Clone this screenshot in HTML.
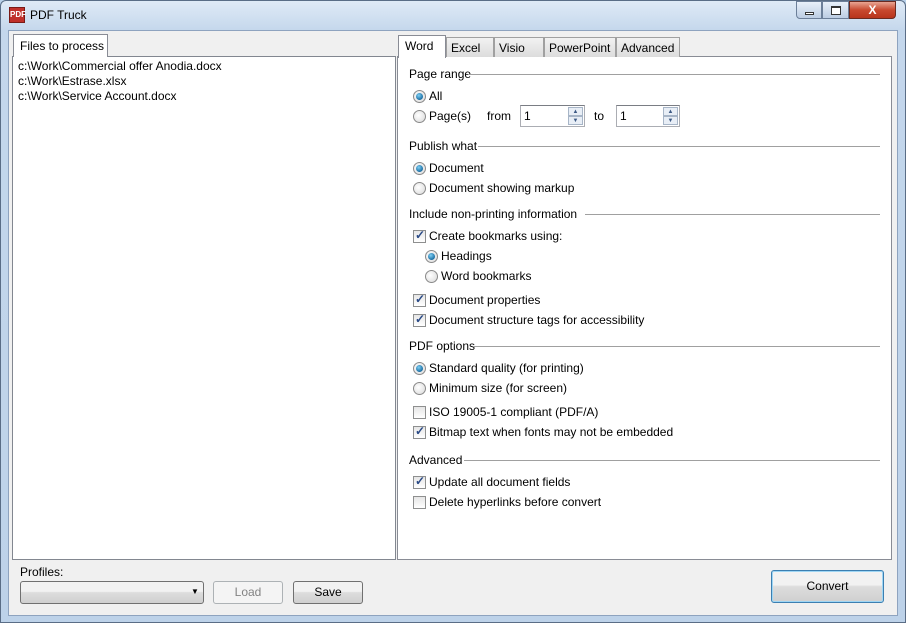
<!DOCTYPE html>
<html><head><meta charset="utf-8"><style>
*{box-sizing:border-box;margin:0;padding:0}
body{width:906px;height:623px;overflow:hidden;font-family:"Liberation Sans",sans-serif;font-size:12px;color:#000;position:relative;background:#b9d1ea}
.a{position:absolute}
.frame{left:0;top:0;width:906px;height:623px;background:linear-gradient(#dfeaf6,#c4d7ec 30px,#bdd2e9);border:1px solid #5a6d86;border-radius:6px 6px 0 0}
.client{left:8px;top:30px;width:890px;height:586px;background:#f0f0f0;border:1px solid #8ea3bf}
.t{white-space:nowrap;line-height:14px}
.rb{width:13px;height:13px;border-radius:50%;border:1px solid #8a8a8a;background:radial-gradient(circle at 40% 40%,#fff,#d8d8d8)}
.rb.on::after{content:"";position:absolute;left:2px;top:2px;width:7px;height:7px;border-radius:50%;background:radial-gradient(circle at 40% 35%,#7fd0f5,#1b6ea3 70%,#164e78)}
.cb{width:13px;height:13px;border:1px solid #8e8f8f;background:linear-gradient(#e6e6e6,#fff)}
.cb.on::after{content:"✓";position:absolute;left:1px;top:-3px;font-size:12px;font-weight:bold;color:#2a4a86}
.hl{height:1px;background:#a0a0a0}
.tab{top:37px;height:20px;border:1px solid #a0a0a0;border-bottom:none;background:linear-gradient(#f2f2f2,#dcdcdc);padding:3px 4px 0 4px}
.btn{border:1px solid #707070;border-radius:3px;background:linear-gradient(#f2f2f2 45%,#dddddd 50%,#cfcfcf);text-align:center;line-height:20px}
</style></head><body>
<div class="a frame"></div>
<div class="a" style="left:9px;top:7px;width:16px;height:16px;background:#c0302a;border:1px solid #7a1a16;color:#fff;font-size:8px;font-weight:bold;line-height:14px;text-align:center">PDF</div>
<div class="a t" style="left:30px;top:8px;font-size:12px">PDF Truck</div>
<div class="a" style="left:796px;top:1px;width:26px;height:18px;border:1px solid #6c7f99;border-radius:0 0 0 4px;background:linear-gradient(#e8f0fa,#bccde3)"><div class="a" style="left:8px;top:10px;width:9px;height:3px;border:1px solid #333;background:#fff"></div></div>
<div class="a" style="left:822px;top:1px;width:27px;height:18px;border:1px solid #6c7f99;background:linear-gradient(#e8f0fa,#bccde3)"><div class="a" style="left:8px;top:4px;width:10px;height:9px;border:1px solid #333;border-top-width:2px;background:#fff"></div></div>
<div class="a" style="left:849px;top:1px;width:47px;height:18px;border:1px solid #6b2a20;border-radius:0 0 4px 0;background:linear-gradient(#e9a593,#c8492f 50%,#b8341c);color:#fff;font-weight:bold;text-align:center;line-height:16px;font-size:12px">X</div>
<div class="a client"></div>
<!-- left panel -->
<div class="a" style="left:12px;top:56px;width:384px;height:504px;background:#fff;border:1px solid #828790"></div>
<div class="a t" style="left:13px;top:34px;width:95px;height:23px;background:#fff;border:1px solid #898c95;border-bottom:none;padding:4px 0 0 6px">Files to process</div>
<div class="a t" style="left:18px;top:59px">c:\Work\Commercial offer Anodia.docx</div>
<div class="a t" style="left:18px;top:74px">c:\Work\Estrase.xlsx</div>
<div class="a t" style="left:18px;top:89px">c:\Work\Service Account.docx</div>
<!-- right panel -->
<div class="a" style="left:397px;top:56px;width:495px;height:504px;background:#fff;border:1px solid #898c95"></div>
<div class="a tab t" style="left:446px;width:48px">Excel</div>
<div class="a tab t" style="left:494px;width:50px">Visio</div>
<div class="a tab t" style="left:544px;width:72px">PowerPoint</div>
<div class="a tab t" style="left:616px;width:64px">Advanced</div>
<div class="a t" style="left:398px;top:35px;width:48px;height:23px;background:#fff;border:1px solid #898c95;border-bottom:none;padding:3px 0 0 6px">Word</div>

<div class="a t" style="left:409px;top:67px">Page range</div><div class="a hl" style="left:468px;top:74px;width:412px"></div>
<div class="a rb on" style="left:413px;top:90px"></div><div class="a t" style="left:429px;top:89px">All</div>
<div class="a rb" style="left:413px;top:110px"></div><div class="a t" style="left:429px;top:109px">Page(s)</div>
<div class="a t" style="left:487px;top:109px">from</div>
<div class="a" style="left:520px;top:105px;width:65px;height:22px;border:1px solid #abadb3;border-top-color:#7a7d84;background:#fff"><span class="a t" style="left:3px;top:3px">1</span><div class="a" style="left:47px;top:1px;width:15px;height:9px;border:1px solid #a7b5c7;background:#e8eef6;font-size:6px;text-align:center;line-height:8px;color:#3d5a85">▲</div><div class="a" style="left:47px;top:10px;width:15px;height:9px;border:1px solid #a7b5c7;background:#e8eef6;font-size:6px;text-align:center;line-height:8px;color:#3d5a85">▼</div></div>
<div class="a t" style="left:594px;top:109px">to</div>
<div class="a" style="left:616px;top:105px;width:64px;height:22px;border:1px solid #abadb3;border-top-color:#7a7d84;background:#fff"><span class="a t" style="left:3px;top:3px">1</span><div class="a" style="left:46px;top:1px;width:15px;height:9px;border:1px solid #a7b5c7;background:#e8eef6;font-size:6px;text-align:center;line-height:8px;color:#3d5a85">▲</div><div class="a" style="left:46px;top:10px;width:15px;height:9px;border:1px solid #a7b5c7;background:#e8eef6;font-size:6px;text-align:center;line-height:8px;color:#3d5a85">▼</div></div>

<div class="a t" style="left:409px;top:139px">Publish what</div><div class="a hl" style="left:478px;top:146px;width:402px"></div>
<div class="a rb on" style="left:413px;top:162px"></div><div class="a t" style="left:429px;top:161px">Document</div>
<div class="a rb" style="left:413px;top:182px"></div><div class="a t" style="left:429px;top:181px">Document showing markup</div>

<div class="a t" style="left:409px;top:207px">Include non-printing information</div><div class="a hl" style="left:585px;top:214px;width:295px"></div>
<div class="a cb on" style="left:413px;top:230px"></div><div class="a t" style="left:429px;top:229px">Create bookmarks using:</div>
<div class="a rb on" style="left:425px;top:250px"></div><div class="a t" style="left:441px;top:249px">Headings</div>
<div class="a rb" style="left:425px;top:270px"></div><div class="a t" style="left:441px;top:269px">Word bookmarks</div>
<div class="a cb on" style="left:413px;top:294px"></div><div class="a t" style="left:429px;top:293px">Document properties</div>
<div class="a cb on" style="left:413px;top:314px"></div><div class="a t" style="left:429px;top:313px">Document structure tags for accessibility</div>

<div class="a t" style="left:409px;top:339px">PDF options</div><div class="a hl" style="left:474px;top:346px;width:406px"></div>
<div class="a rb on" style="left:413px;top:362px"></div><div class="a t" style="left:429px;top:361px">Standard quality (for printing)</div>
<div class="a rb" style="left:413px;top:382px"></div><div class="a t" style="left:429px;top:381px">Minimum size (for screen)</div>
<div class="a cb" style="left:413px;top:406px"></div><div class="a t" style="left:429px;top:405px">ISO 19005-1 compliant (PDF/A)</div>
<div class="a cb on" style="left:413px;top:426px"></div><div class="a t" style="left:429px;top:425px">Bitmap text when fonts may not be embedded</div>

<div class="a t" style="left:409px;top:453px">Advanced</div><div class="a hl" style="left:464px;top:460px;width:416px"></div>
<div class="a cb on" style="left:413px;top:476px"></div><div class="a t" style="left:429px;top:475px">Update all document fields</div>
<div class="a cb" style="left:413px;top:496px"></div><div class="a t" style="left:429px;top:495px">Delete hyperlinks before convert</div>

<!-- bottom -->
<div class="a t" style="left:20px;top:565px">Profiles:</div>
<div class="a btn" style="left:20px;top:581px;width:184px;height:23px"><span class="a" style="left:170px;top:0;font-size:8px">▼</span></div>
<div class="a" style="left:213px;top:581px;width:70px;height:23px;border:1px solid #adb2b5;border-radius:3px;background:#f4f4f4;color:#838383;text-align:center;line-height:21px">Load</div>
<div class="a btn" style="left:293px;top:581px;width:70px;height:23px">Save</div>
<div class="a btn" style="left:771px;top:570px;width:113px;height:33px;border-color:#3c7fb1;line-height:31px;box-shadow:inset 0 0 0 1px #9fd6f4">Convert</div>
</body></html>
